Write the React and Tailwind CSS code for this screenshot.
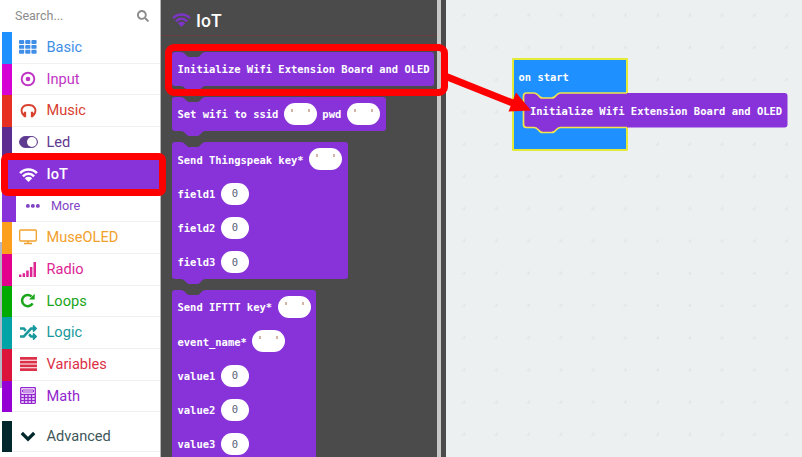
import React from "react";
import { FaRandom, FaSearch } from "react-icons/fa";

const WifiIcon = ({ className = "" }) => (
  <svg className={className} width="19" height="14" viewBox="0 0 20 15" fill="none" stroke="currentColor" strokeWidth="2.700">
    <path d="M1 5.600C6 .4 14 .4 19 5.600M4 8.900C7.500 5.200 12.500 5.200 16 8.900" />
    <path d="M6 10.900C8.500 8.900 11.500 8.900 14 10.900L10 15z" fill="currentColor" stroke="none" />
  </svg>
);
const ChevronIcon = () => (
  <svg width="16" height="11" viewBox="0 0 16 11" fill="none" stroke="currentColor" strokeWidth="3.200">
    <path d="M1.800 2L8 8.200L14.200 2" />
  </svg>
);
const RepeatIcon = () => (
  <svg width="16" height="15" viewBox="0 0 16 15" fill="none" stroke="currentColor" strokeWidth="2.500">
    <path d="M12.600 10.300A5.600 5.600 0 1 1 11.500 3.500" />
    <path d="M14.700 .8v5.700H9z" fill="currentColor" stroke="none" />
  </svg>
);
const GridIcon = () => (
  <svg width="18" height="14" viewBox="0 0 18 14" fill="currentColor">
    {[0, 6.2, 12.4].map((x) => [0, 4.9, 9.8].map((y) => <rect key={x + "-" + y} x={x} y={y} width="5.2" height="3.9" rx="0.9" />))}
  </svg>
);
const TargetIcon = () => (
  <svg width="16" height="16" viewBox="0 0 16 16" fill="none" stroke="currentColor" strokeWidth="1.9">
    <circle cx="8" cy="8" r="6.3" />
    <circle cx="8" cy="8" r="2.3" fill="currentColor" stroke="none" />
  </svg>
);
const HeadphonesIcon = () => (
  <svg width="17" height="16" viewBox="0 0 17 16" fill="none" stroke="currentColor" strokeWidth="1.9">
    <path d="M3.1 12C-.4 6.500 2.500 2 8.500 2s8.900 4.500 5.400 10" />
    <path d="M5 8.700v5.600M12 8.700v5.600" strokeWidth="2.300" />
    <path d="M4 9.500l-2 2 2 2.500zM13 9.500l2 2-2 2.500z" fill="currentColor" stroke="none" />
  </svg>
);
const ToggleIcon = () => (
  <svg width="19" height="12" viewBox="0 0 19 12">
    <rect x=".6" y=".6" width="17.800" height="10.800" rx="5.400" fill="currentColor" stroke="currentColor" strokeWidth="1" />
    <circle cx="12.900" cy="6" r="4.900" fill="#fff" />
  </svg>
);
const ScreenIcon = () => (
  <svg width="18" height="16" viewBox="0 0 18 16" fill="none" stroke="currentColor" strokeWidth="1.300">
    <rect x=".7" y="1" width="16.600" height="11" rx="1" />
    <path d="M9 12v2M5 14.500h8" />
  </svg>
);
const SignalIcon = () => (
  <svg width="18" height="16" viewBox="0 0 18 16" fill="currentColor">
    <path d="M0 13.500h2.400V16H0zM3.600 12.200h2.500V16H3.600zM7.200 9.600h2.500V16H7.200zM10.900 6h2.500v10h-2.500zM14.500 1H17v15h-2.500z" />
  </svg>
);
const LinesIcon = () => (
  <svg width="17" height="14" viewBox="0 0 17 14" fill="currentColor">
    <path d="M0 0h17v2.700H0zM0 3.800h17v2.700H0zM0 7.600h17v2.700H0zM0 11.300h17V14H0z" />
  </svg>
);
const CalcIcon = () => (
  <svg width="16" height="17" viewBox="0 0 16 17" fill="none" stroke="currentColor" strokeWidth="1.300">
    <rect x=".7" y=".7" width="14.600" height="15.600" rx=".5" />
    <path d="M2.500 3h11v2h-11z" strokeWidth="1" />
    <path d="M1 7.500h14M1 10.500h14M1 13.500h14M4.500 7.500V16M8 7.500V16M11.500 7.500V16" />
  </svg>
);

const TOP_ROWS = [
  { label: "Basic", bar: "bg-[#1e90ff]", text: "text-[#3f8ee8]", icon: <GridIcon /> },
  { label: "Input", bar: "bg-[#d400d4]", text: "text-[#c036c4]", icon: <TargetIcon /> },
  { label: "Music", bar: "bg-[#e63022]", text: "text-[#d8402f]", icon: <HeadphonesIcon /> },
  { label: "Led", bar: "bg-[#5c2d91]", text: "text-[#5f3a91]", icon: <ToggleIcon /> },
];
const BOTTOM_ROWS = [
  { label: "MuseOLED", bar: "bg-[#fb9f1c]", text: "text-[#f2a02c]", icon: <ScreenIcon /> },
  { label: "Radio", bar: "bg-[#e3008c]", text: "text-[#dd2594]", icon: <SignalIcon /> },
  { label: "Loops", bar: "bg-[#00aa00]", text: "text-[#1ba51b]", icon: <RepeatIcon /> },
  { label: "Logic", bar: "bg-[#00a4a6]", text: "text-[#17989c]", icon: <FaRandom size={17} /> },
  { label: "Variables", bar: "bg-[#dc143c]", text: "text-[#dc3048]", icon: <LinesIcon /> },
  { label: "Math", bar: "bg-[#9400d3]", text: "text-[#9225ce]", icon: <CalcIcon /> },
];

function Row({ row }) {
  return (
    <div className="flex h-[31.7px] shrink-0">
      <div className={`w-[10px] ${row.bar}`} />
      <div className={`flex flex-1 items-center border-b border-[#f0f0f0] ${row.text}`}>
        <span className="flex w-[34.500px] justify-center pr-[2px]">{row.icon}</span>
        <span className="text-[14.600px] leading-none">{row.label}</span>
      </div>
    </div>
  );
}

function Sidebar() {
  return (
    <aside className="relative z-20 flex w-[160px] shrink-0 flex-col bg-white pl-[2px] font-['Roboto',sans-serif]">
      <div className="absolute left-0 top-[242px] h-[146px] w-[2px] bg-[#b4b8c4]" />
      <div className="flex h-[32px] shrink-0 items-center justify-between pl-[13px] pr-[11px] text-[#8c8c8c]">
        <span className="text-[12.5px]">Search...</span>
        <FaSearch size={12} />
      </div>
      {TOP_ROWS.map((r) => <Row key={r.label} row={r} />)}
      <div className="flex h-[31.7px] shrink-0 items-center bg-[#8833d9] pl-[10px] text-white">
        <span className="flex w-[34.500px] justify-center pr-[2px]"><WifiIcon /></span>
        <span className="text-[14.600px] font-medium leading-none">IoT</span>
      </div>
      <div className="flex h-[31.7px] shrink-0">
        <div className="w-[14px] bg-[#8833d9]" />
        <div className="flex flex-1 items-center border-b border-[#f0f0f0] text-[#8244c4]">
          <svg className="ml-[10px] mr-[11px]" width="14" height="4" viewBox="0 0 14 4" fill="currentColor">
            <rect width="3.700" height="3.700" rx="1.500" /><rect x="5" width="3.700" height="3.700" rx="1.500" /><rect x="10" width="3.700" height="3.700" rx="1.500" />
          </svg>
          <span className="relative top-px text-[12.700px] leading-none">More</span>
        </div>
      </div>
      {BOTTOM_ROWS.map((r) => <Row key={r.label} row={r} />)}
      <div className="mt-[8.500px]">
        <Row row={{ label: "Advanced", bar: "bg-[#00272b]", text: "text-[#40575a]", icon: <span className="text-[#00272b]"><ChevronIcon /></span> }} />
      </div>
      <div className="absolute left-px top-[152.500px] h-[43px] w-[165px] rounded-[7px] border-[7px] border-[#fe0000]" />
    </aside>
  );
}

const Text = () => (
  <span className="flex h-[22px] w-[33px] items-start justify-between rounded-full bg-white px-[7px] pt-[6px]">
    <span className="h-[3px] w-[2px] bg-[#d3b5a8]" />
    <span className="h-[3px] w-[2px] bg-[#d3b5a8]" />
  </span>
);
const Num = () => (
  <span className="flex h-[22px] w-[28px] items-center justify-center rounded-full bg-white pt-px font-normal text-[#575e75]">0</span>
);

function Block({ rows, className, open }) {
  return (
    <div className={`relative rounded-[3px] bg-[#8833d9] pl-[5.500px] ${className}`}>
      <svg className="absolute left-[8px] top-0" width="26" height="5" viewBox="0 0 26 5"><path d="M0 0h26c-2 0-3 .5-4.500 2l-1.500 1.500c-1 1-2 1.500-3.500 1.500H10C8.500 5 7.500 4.500 6.500 3.500L5 2C3.500.5 2 0 0 0z" fill="#4b4b4b" /></svg>
      {rows.map((items, i) => (
        <div key={i} className="flex h-[34.2px] items-center gap-[5.500px] whitespace-pre">
          {items.map((it, j) => it === "@" ? <Text key={j} /> : it === "#" ? <Num key={j} /> : <span key={j} className="relative top-px">{it}</span>)}
        </div>
      ))}
      {!open && <svg className="absolute left-[8px] top-full" width="26" height="5" viewBox="0 0 26 5"><path d="M0 0h26c-2 0-3 .5-4.500 2l-1.500 1.500c-1 1-2 1.500-3.500 1.500H10C8.500 5 7.500 4.500 6.500 3.500L5 2C3.500.5 2 0 0 0z" fill="#8833d9" /></svg>}
    </div>
  );
}

function Flyout() {
  return (
    <section className="relative z-10 flex w-[286px] shrink-0 border-l border-[#b5b5b5] bg-[#4b4b4b]">
      <div className="flex h-[457px] w-[276px] flex-col overflow-hidden font-['DejaVu_Sans_Mono',monospace] text-[10.470px] font-bold text-white">
        <div className="flex h-[36px] shrink-0 items-center border-b border-[#663f42] pl-[11px] pt-[8px] font-['Roboto',sans-serif] text-[17.500px] font-medium">
          <WifiIcon className="mb-[3px] text-[#7c35c5]" />
          <span className="ml-[5px]">IoT</span>
        </div>
        <div className="flex flex-col items-start gap-[11px] pl-[11px] pt-[16px]">
          <Block className="w-[262px]" rows={[["Initialize Wifi Extension Board and OLED"]]} />
          <Block className="w-[214px]" rows={[["Set wifi to ssid", "@", "pwd", "@"]]} />
          <Block className="w-[176px]" rows={[["Send Thingspeak key*", "@"], ["field1", "#"], ["field2", "#"], ["field3", "#"]]} />
          <Block open className="w-[144px]" rows={[["Send IFTTT key*", "@"], ["event_name*", "@"], ["value1", "#"], ["value2", "#"], ["value3", "#"]]} />
        </div>
      </div>
      <div className="w-[4px] bg-[#c8c8c8]" />
      <div className="absolute left-[4px] top-[44px] z-10 h-[52px] w-[282.500px] rounded-[9px] border-[7.500px] border-[#fe0000]" />
    </section>
  );
}

function Workspace() {
  return (
    <main className="relative flex-1 overflow-hidden bg-[#ecf0f0]">
      <svg className="absolute inset-0" width="356" height="457">
        <defs>
          <pattern id="dots" x="15.500" y="12" width="32.250" height="32.250" patternUnits="userSpaceOnUse">
            <path d="M0 4.500L4 0.500V4.500z" fill="#e3e6e6" />
          </pattern>
        </defs>
        <rect width="356" height="457" fill="url(#dots)" />
      </svg>
      <div className="absolute left-[66px] top-[58px] h-[92.500px] w-[115.500px] rounded-[1px] border-2 border-[#e4ea38] bg-[#1e90ff]" />
      <svg className="absolute left-[76px] top-[91px]" width="270" height="46" viewBox="0 0 270 46">
        <path d="M4.500 2h7.500c2 0 3 1 4 2l2 2c1 .8 1.500 1 2.500 1h9c1.500 0 2-.3 3-1l2-2c1-1 2-2 4-2h224q3 0 3 3v28.500q0 3-3 3h-224c-2 0-3 1-4 2l-2 2c-1 .8-1.500 1-3 1h-9c-1 0-1.500-.2-2.500-1l-2-2c-1-1-2-2-4-2H4.500q-3 0-3-3V5q0-3 3-3z" fill="#8833d9" />
        <path d="M105 2h-66.500c-2 0-3 1-4 2l-2 2c-1 .8-1.500 1-3 1h-9c-1 0-1.500-.2-2.500-1l-2-2c-1-1-2-2-4-2H4.500q-3 0-3 3v28.500q0 3 3 3H12c2 0 3 1 4 2l2 2c1 .8 1.500 1 2.500 1h9c1.500 0 2-.2 3-1l2-2c1-1 2-2 4-2h66.500" fill="none" stroke="#f2e64a" strokeWidth="1.700" />
      </svg>
      <div className="absolute left-[72.500px] top-[69px] whitespace-nowrap font-['DejaVu_Sans_Mono',monospace] text-[10.470px] font-bold leading-[16px] text-white">on start</div>
      <div className="absolute left-[84px] top-[102.500px] whitespace-nowrap font-['DejaVu_Sans_Mono',monospace] text-[10.470px] font-bold leading-[16px] text-white">Initialize Wifi Extension Board and OLED</div>
      <svg className="absolute left-0 top-[65px]" width="90" height="55" viewBox="0 0 90 55">
        <path d="M-1 11L68 38.500" stroke="#fe0000" strokeWidth="7" />
        <path d="M85 45.500L70 27.500L62.500 46.500z" fill="#fe0000" />
      </svg>
    </main>
  );
}

export default function App() {
  return (
    <div className="flex h-[457px] w-[802px] overflow-hidden">
      <Sidebar />
      <Flyout />
      <Workspace />
    </div>
  );
}
